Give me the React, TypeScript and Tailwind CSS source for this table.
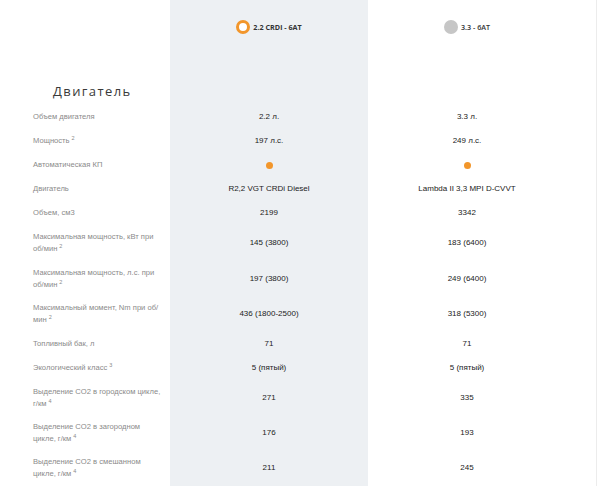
import React from "react";

type Row = { label: string; sup?: string; a: string; b: string; dot?: boolean; h: string };

const rows: Row[] = [
  { label: "Объем двигателя", a: "2.2 л.", b: "3.3 л.", h: "h-[24px]" },
  { label: "Мощность", sup: "2", a: "197 л.с.", b: "249 л.с.", h: "h-[24px]" },
  { label: "Автоматическая КП", a: "", b: "", dot: true, h: "h-[24px]" },
  { label: "Двигатель", a: "R2,2 VGT CRDi Diesel", b: "Lambda II 3,3 MPI D-CVVT", h: "h-[24px]" },
  { label: "Объем, см3", a: "2199", b: "3342", h: "h-[24px]" },
  { label: "Максимальная мощность, кВт при об/мин", sup: "2", a: "145 (3800)", b: "183 (6400)", h: "h-[36px]" },
  { label: "Максимальная мощность, л.с. при об/мин", sup: "2", a: "197 (3800)", b: "249 (6400)", h: "h-[35px]" },
  { label: "Максимальный момент, Nm при об/мин", sup: "2", a: "436 (1800-2500)", b: "318 (5300)", h: "h-[36px]" },
  { label: "Топливный бак, л", a: "71", b: "71", h: "h-[24px]" },
  { label: "Экологический класс", sup: "3", a: "5 (пятый)", b: "5 (пятый)", h: "h-[24px]" },
  { label: "Выделение CO2 в городском цикле, г/км", sup: "4", a: "271", b: "335", h: "h-[35px]" },
  { label: "Выделение CO2 в загородном цикле, г/км", sup: "4", a: "176", b: "193", h: "h-[35px]" },
  { label: "Выделение CO2 в смешанном цикле, г/км", sup: "4", a: "211", b: "245", h: "h-[35px]" },
];

function Value({ text, dot }: { text: string; dot?: boolean }) {
  if (dot) return <span className="block w-[7px] h-[7px] rounded-full bg-[#f2962b]" />;
  return <span>{text}</span>;
}

export default function App() {
  return (
    <div className="w-[600px] h-[486px] overflow-hidden bg-white text-[8px] leading-[12px] font-['Liberation_Sans',Arial,sans-serif]">
      <div className="w-[597px] border-r border-[#ececec] min-h-full flex">
        <div className="w-[170px] shrink-0">
          <div className="h-[105px] flex items-end pb-[4px] pl-[53px]">
            <h2 className="text-[13px] leading-[20px] text-[#3a3a3a] font-['Open_Sans',sans-serif] tracking-[1.4px]">Двигатель</h2>
          </div>
          {rows.map((r, i) => (
            <div key={i} className={`flex items-center pl-[33px] pr-[6px] text-[7.6px] text-[#8a8a8a] ${r.h}`}>
              <span>
                {r.label}
                {r.sup && <span className="text-[5.5px] leading-[6px] align-[3px] ml-[2px]">{r.sup}</span>}
              </span>
            </div>
          ))}
        </div>
        <div className="w-[198px] shrink-0 bg-[#edf0f3]">
          <div className="h-[105px] flex justify-center pt-[20px]">
            <div className="flex items-center gap-[3px] h-[14px]">
              <span className="w-[14px] h-[14px] rounded-full border-[3px] border-[#f2962b] bg-white" />
              <span className="font-bold text-[#333] font-['Open_Sans',sans-serif] text-[7.2px]">2.2 CRDi - 6AT</span>
            </div>
          </div>
          {rows.map((r, i) => (
            <div key={i} className={`flex items-center justify-center text-[#222] ${r.h}`}>
              <Value text={r.a} dot={r.dot} />
            </div>
          ))}
        </div>
        <div className="w-[198px] shrink-0">
          <div className="h-[105px] flex justify-center pt-[20px]">
            <div className="flex items-center gap-[3px] h-[14px]">
              <span className="w-[14px] h-[14px] rounded-full bg-[#c6c6c6]" />
              <span className="text-[#333] font-['Open_Sans',sans-serif] text-[7.2px] font-semibold">3.3 - 6AT</span>
            </div>
          </div>
          {rows.map((r, i) => (
            <div key={i} className={`flex items-center justify-center text-[#222] ${r.h}`}>
              <Value text={r.b} dot={r.dot} />
            </div>
          ))}
        </div>
      </div>
    </div>
  );
}
